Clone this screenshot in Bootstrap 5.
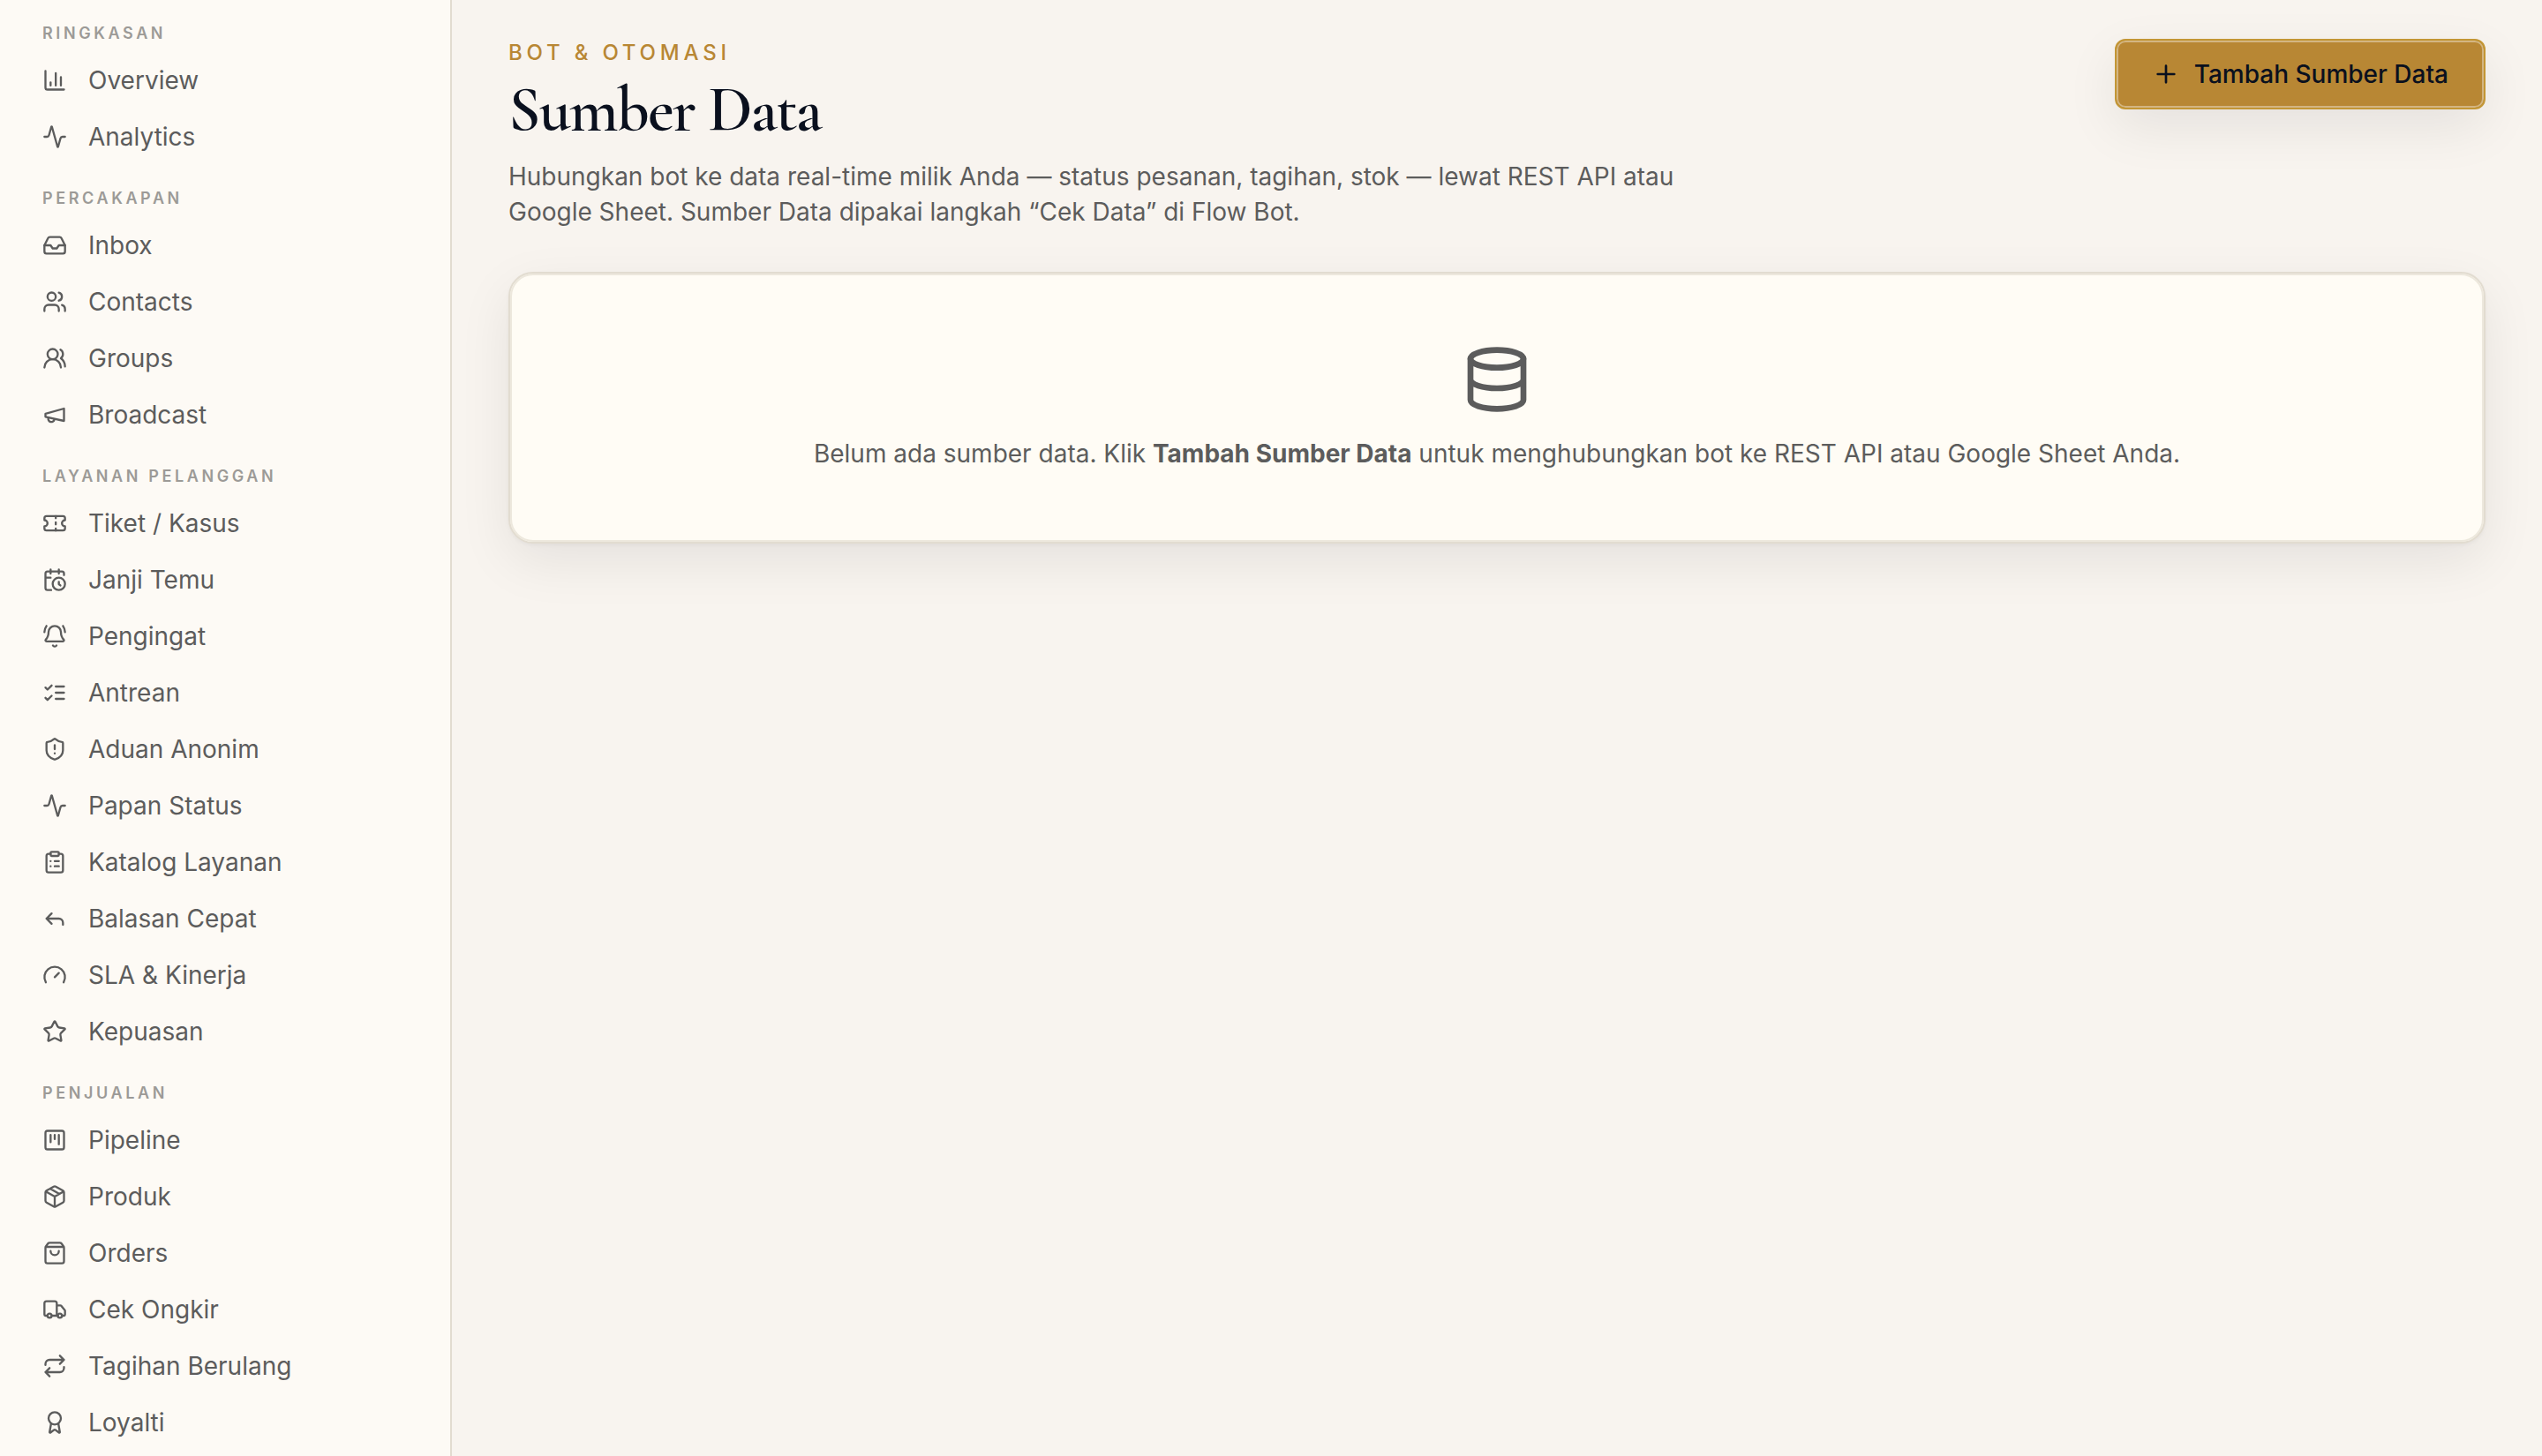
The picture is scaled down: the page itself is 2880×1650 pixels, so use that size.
<!DOCTYPE html>
<html lang="id">
<head>
<meta charset="utf-8">
<meta name="viewport" content="width=device-width, initial-scale=1">
<title>Sumber Data</title>
<link href="https://cdn.jsdelivr.net/npm/bootstrap@5.3.0/dist/css/bootstrap.min.css" rel="stylesheet">
<style>
  :root {
    --ink: #0a101e;
    --muted-ink: #5c5c5c;
    --gold: #b88734;
    --line: #e2dcd0;
    --paper: #f8f4ef;
  }
  body {
    font-family: Inter, "Liberation Sans", sans-serif;
    font-size: 28px;
    line-height: 40px;
    color: var(--muted-ink);
    background: var(--paper);
  }
  .icon {
    width: 28px;
    height: 28px;
    flex: none;
    fill: none;
    stroke: currentColor;
    stroke-width: 2;
    stroke-linecap: round;
    stroke-linejoin: round;
  }
  .side-panel {
    width: 512px;
    background: #fdfaf5;
    border-right: 2px solid var(--line);
    padding: 24px 24px 0;
  }
  .side-groups { gap: 26px; }
  .side-heading {
    font-size: 18px;
    line-height: 28px;
    font-weight: 600;
    letter-spacing: 0.2em;
    color: #9c9a97;
    margin-bottom: 9px;
    padding-left: 24px;
  }
  .side-link {
    height: 60px;
    gap: 24px;
    padding: 0 24px;
    border-radius: 12px;
    color: inherit;
  }
  .side-link:hover { background: #f3eee5; color: var(--ink); }
  .page-main { padding: 44px 64px; }
  .page-eyebrow {
    font-size: 24px;
    line-height: 32px;
    font-weight: 500;
    letter-spacing: 0.2em;
    color: var(--gold);
  }
  .page-title {
    font-family: "Cormorant Garamond", "Liberation Serif", serif;
    font-size: 72px;
    line-height: 96px;
    font-weight: 600;
    letter-spacing: -0.025em;
    color: var(--ink);
  }
  .page-intro { max-width: 1344px; }
  .btn-gold {
    --bs-btn-color: var(--ink);
    --bs-btn-bg: var(--gold);
    --bs-btn-border-color: #c39635;
    --bs-btn-hover-color: var(--ink);
    --bs-btn-hover-bg: #c39635;
    --bs-btn-hover-border-color: #c39635;
    --bs-btn-border-width: 2px;
    --bs-btn-border-radius: 12px;
    --bs-btn-padding-x: 40px;
    --bs-btn-padding-y: 18px;
    --bs-btn-font-size: 28px;
    --bs-btn-line-height: 40px;
    --bs-btn-font-weight: 500;
    gap: 16px;
    box-shadow: inset 0 0 0 2px #d3b582, 0 20px 60px rgba(10, 16, 30, .08);
  }
  .btn-gold .icon { width: 32px; height: 32px; }
  .empty-card {
    --bs-card-bg: #fffcf5;
    --bs-card-color: var(--muted-ink);
    --bs-card-border-color: var(--line);
    --bs-card-border-width: 2px;
    --bs-card-border-radius: 28px;
    --bs-card-spacer-x: 80px;
    --bs-card-spacer-y: 80px;
    box-shadow: inset 0 0 0 2px #ede8dd, 0 2px 4px rgba(10, 16, 30, .04), 0 20px 60px rgba(10, 16, 30, .08);
  }
  .empty-card .icon { width: 80px; height: 80px; }
</style>
<script src="https://cdn.jsdelivr.net/npm/bootstrap@5.3.0/dist/js/bootstrap.bundle.min.js"></script>
</head>
<body>
<svg class="d-none" aria-hidden="true">
  <symbol id="i-chart" viewBox="0 0 24 24"><path d="M3 3v16a2 2 0 0 0 2 2h16M18 17V9M13 17V5M8 17v-3"/></symbol>
  <symbol id="i-activity" viewBox="0 0 24 24"><path d="M22 12h-2.48a2 2 0 0 0-1.93 1.46l-2.35 8.36a.25.25 0 0 1-.48 0L9.24 2.18a.25.25 0 0 0-.48 0l-2.35 8.36A2 2 0 0 1 4.49 12H2"/></symbol>
  <symbol id="i-inbox" viewBox="0 0 24 24"><path d="M22 12h-6l-2 3h-4l-2-3H2"/><path d="M5.45 5.11 2 12v6a2 2 0 0 0 2 2h16a2 2 0 0 0 2-2v-6l-3.45-6.89A2 2 0 0 0 16.76 4H7.24a2 2 0 0 0-1.79 1.11z"/></symbol>
  <symbol id="i-users" viewBox="0 0 24 24"><path d="M16 21v-2a4 4 0 0 0-4-4H6a4 4 0 0 0-4 4v2"/><circle cx="9" cy="7" r="4"/><path d="M22 21v-2a4 4 0 0 0-3-3.87M16 3.13a4 4 0 0 1 0 7.75"/></symbol>
  <symbol id="i-groups" viewBox="0 0 24 24"><path d="M18 21a8 8 0 0 0-16 0"/><circle cx="10" cy="8" r="5"/><path d="M22 20c0-3.37-2-6.5-4-8a5 5 0 0 0-.45-8.3"/></symbol>
  <symbol id="i-megaphone" viewBox="0 0 24 24"><path d="m3 11 18-5v12L3 14v-3z"/><path d="M11.6 16.8a3 3 0 1 1-5.8-1.6"/></symbol>
  <symbol id="i-ticket" viewBox="0 0 24 24"><path d="M2 9a3 3 0 0 1 0 6v2a2 2 0 0 0 2 2h16a2 2 0 0 0 2-2v-2a3 3 0 0 1 0-6V7a2 2 0 0 0-2-2H4a2 2 0 0 0-2 2Z"/><path d="M13 5v2M13 17v2M13 11v2"/></symbol>
  <symbol id="i-calendar" viewBox="0 0 24 24"><path d="M21 7.5V6a2 2 0 0 0-2-2H5a2 2 0 0 0-2 2v14a2 2 0 0 0 2 2h3.5M16 2v4M8 2v4M3 10h5M17.5 17.5 16 16.3V14"/><circle cx="16" cy="16" r="6"/></symbol>
  <symbol id="i-bell" viewBox="0 0 24 24"><path d="M10.268 21a2 2 0 0 0 3.464 0M22 8c0-2.3-.8-4.3-2-6M3.262 15.326A1 1 0 0 0 4 17h16a1 1 0 0 0 .74-1.673C19.41 13.956 18 12.499 18 8A6 6 0 0 0 6 8c0 4.499-1.411 5.956-2.738 7.326M4 2C2.8 3.7 2 5.7 2 8"/></symbol>
  <symbol id="i-checks" viewBox="0 0 24 24"><path d="m3 17 2 2 4-4M3 7l2 2 4-4M13 6h8M13 12h8M13 18h8"/></symbol>
  <symbol id="i-shield" viewBox="0 0 24 24"><path d="M20 13c0 5-3.5 7.5-7.66 8.95a1 1 0 0 1-.67-.01C7.5 20.5 4 18 4 13V6a1 1 0 0 1 1-1c2 0 4.5-1.2 6.24-2.72a1.17 1.17 0 0 1 1.52 0C14.51 3.81 17 5 19 5a1 1 0 0 1 1 1zM12 8v4M12 16h.01"/></symbol>
  <symbol id="i-clipboard" viewBox="0 0 24 24"><rect x="8" y="2" width="8" height="4" rx="1"/><path d="M16 4h2a2 2 0 0 1 2 2v14a2 2 0 0 1-2 2H6a2 2 0 0 1-2-2V6a2 2 0 0 1 2-2h2M12 11h4M12 16h4M8 11h.01M8 16h.01"/></symbol>
  <symbol id="i-reply" viewBox="0 0 24 24"><path d="m9 17-5-5 5-5M20 18v-2a4 4 0 0 0-4-4H4"/></symbol>
  <symbol id="i-gauge" viewBox="0 0 24 24"><path d="m12 14 4-4M3.34 19a10 10 0 1 1 17.32 0"/></symbol>
  <symbol id="i-star" viewBox="0 0 24 24"><path d="M11.525 2.295a.53.53 0 0 1 .95 0l2.31 4.679a2.123 2.123 0 0 0 1.595 1.16l5.166.756a.53.53 0 0 1 .294.904l-3.736 3.638a2.123 2.123 0 0 0-.611 1.878l.882 5.14a.53.53 0 0 1-.771.56l-4.618-2.428a2.122 2.122 0 0 0-1.973 0L6.396 21.01a.53.53 0 0 1-.77-.56l.881-5.139a2.122 2.122 0 0 0-.611-1.879L2.16 9.795a.53.53 0 0 1 .294-.906l5.165-.755a2.122 2.122 0 0 0 1.597-1.16z"/></symbol>
  <symbol id="i-kanban" viewBox="0 0 24 24"><rect x="3" y="3" width="18" height="18" rx="2"/><path d="M8 7v7M12 7v4M16 7v9"/></symbol>
  <symbol id="i-package" viewBox="0 0 24 24"><path d="m7.5 4.27 9 5.15M21 8a2 2 0 0 0-1-1.73l-7-4a2 2 0 0 0-2 0l-7 4A2 2 0 0 0 3 8v8a2 2 0 0 0 1 1.73l7 4a2 2 0 0 0 2 0l7-4A2 2 0 0 0 21 16ZM3.3 7l8.7 5 8.7-5M12 22V12"/></symbol>
  <symbol id="i-bag" viewBox="0 0 24 24"><path d="M16 10a4 4 0 0 1-8 0M3.103 6.034h17.794M3.4 5.467a2 2 0 0 0-.4 1.2V20a2 2 0 0 0 2 2h14a2 2 0 0 0 2-2V6.667a2 2 0 0 0-.4-1.2l-2-2.667A2 2 0 0 0 17 2H7a2 2 0 0 0-1.6.8z"/></symbol>
  <symbol id="i-truck" viewBox="0 0 24 24"><path d="M14 18V6a2 2 0 0 0-2-2H4a2 2 0 0 0-2 2v11a1 1 0 0 0 1 1h2M15 18H9M19 18h2a1 1 0 0 0 1-1v-3.65a1 1 0 0 0-.22-.624l-3.48-4.35A1 1 0 0 0 17.52 8H14"/><circle cx="17" cy="18" r="2"/><circle cx="7" cy="18" r="2"/></symbol>
  <symbol id="i-repeat" viewBox="0 0 24 24"><path d="m17 2 4 4-4 4M3 11v-1a4 4 0 0 1 4-4h14M7 22l-4-4 4-4M21 13v1a4 4 0 0 1-4 4H3"/></symbol>
  <symbol id="i-award" viewBox="0 0 24 24"><path d="m15.477 12.89 1.515 8.526a.5.5 0 0 1-.81.47l-3.58-2.687a1 1 0 0 0-1.197 0l-3.586 2.686a.5.5 0 0 1-.81-.469l1.514-8.526"/><circle cx="12" cy="8" r="6"/></symbol>
  <symbol id="i-plus" viewBox="0 0 24 24"><path d="M5 12h14M12 5v14"/></symbol>
  <symbol id="i-database" viewBox="0 0 24 24"><ellipse cx="12" cy="5" rx="9" ry="3"/><path d="M3 5v14a9 3 0 0 0 18 0V5M3 12a9 3 0 0 0 18 0"/></symbol>
</svg>

<div class="d-flex vh-100 overflow-hidden">
  <aside class="side-panel flex-shrink-0 overflow-hidden">
    <nav class="side-groups d-flex flex-column" aria-label="Menu utama">
      <section>
        <h2 class="side-heading">RINGKASAN</h2>
        <div class="nav flex-column gap-1">
          <a class="side-link d-flex align-items-center text-decoration-none" href="#"><svg class="icon"><use href="#i-chart"/></svg>Overview</a>
          <a class="side-link d-flex align-items-center text-decoration-none" href="#"><svg class="icon"><use href="#i-activity"/></svg>Analytics</a>
        </div>
      </section>
      <section>
        <h2 class="side-heading">PERCAKAPAN</h2>
        <div class="nav flex-column gap-1">
          <a class="side-link d-flex align-items-center text-decoration-none" href="#"><svg class="icon"><use href="#i-inbox"/></svg>Inbox</a>
          <a class="side-link d-flex align-items-center text-decoration-none" href="#"><svg class="icon"><use href="#i-users"/></svg>Contacts</a>
          <a class="side-link d-flex align-items-center text-decoration-none" href="#"><svg class="icon"><use href="#i-groups"/></svg>Groups</a>
          <a class="side-link d-flex align-items-center text-decoration-none" href="#"><svg class="icon"><use href="#i-megaphone"/></svg>Broadcast</a>
        </div>
      </section>
      <section>
        <h2 class="side-heading">LAYANAN PELANGGAN</h2>
        <div class="nav flex-column gap-1">
          <a class="side-link d-flex align-items-center text-decoration-none" href="#"><svg class="icon"><use href="#i-ticket"/></svg>Tiket / Kasus</a>
          <a class="side-link d-flex align-items-center text-decoration-none" href="#"><svg class="icon"><use href="#i-calendar"/></svg>Janji Temu</a>
          <a class="side-link d-flex align-items-center text-decoration-none" href="#"><svg class="icon"><use href="#i-bell"/></svg>Pengingat</a>
          <a class="side-link d-flex align-items-center text-decoration-none" href="#"><svg class="icon"><use href="#i-checks"/></svg>Antrean</a>
          <a class="side-link d-flex align-items-center text-decoration-none" href="#"><svg class="icon"><use href="#i-shield"/></svg>Aduan Anonim</a>
          <a class="side-link d-flex align-items-center text-decoration-none" href="#"><svg class="icon"><use href="#i-activity"/></svg>Papan Status</a>
          <a class="side-link d-flex align-items-center text-decoration-none" href="#"><svg class="icon"><use href="#i-clipboard"/></svg>Katalog Layanan</a>
          <a class="side-link d-flex align-items-center text-decoration-none" href="#"><svg class="icon"><use href="#i-reply"/></svg>Balasan Cepat</a>
          <a class="side-link d-flex align-items-center text-decoration-none" href="#"><svg class="icon"><use href="#i-gauge"/></svg>SLA &amp; Kinerja</a>
          <a class="side-link d-flex align-items-center text-decoration-none" href="#"><svg class="icon"><use href="#i-star"/></svg>Kepuasan</a>
        </div>
      </section>
      <section>
        <h2 class="side-heading">PENJUALAN</h2>
        <div class="nav flex-column gap-1">
          <a class="side-link d-flex align-items-center text-decoration-none" href="#"><svg class="icon"><use href="#i-kanban"/></svg>Pipeline</a>
          <a class="side-link d-flex align-items-center text-decoration-none" href="#"><svg class="icon"><use href="#i-package"/></svg>Produk</a>
          <a class="side-link d-flex align-items-center text-decoration-none" href="#"><svg class="icon"><use href="#i-bag"/></svg>Orders</a>
          <a class="side-link d-flex align-items-center text-decoration-none" href="#"><svg class="icon"><use href="#i-truck"/></svg>Cek Ongkir</a>
          <a class="side-link d-flex align-items-center text-decoration-none" href="#"><svg class="icon"><use href="#i-repeat"/></svg>Tagihan Berulang</a>
          <a class="side-link d-flex align-items-center text-decoration-none" href="#"><svg class="icon"><use href="#i-award"/></svg>Loyalti</a>
        </div>
      </section>
    </nav>
  </aside>

  <main class="page-main flex-grow-1 overflow-auto">
    <header class="d-flex justify-content-between align-items-start mb-5">
      <div>
        <p class="page-eyebrow mb-0">BOT &amp; OTOMASI</p>
        <h1 class="page-title mb-2">Sumber Data</h1>
        <p class="page-intro mb-0">Hubungkan bot ke data real-time milik Anda — status pesanan, tagihan, stok — lewat REST API atau Google Sheet. Sumber Data dipakai langkah “Cek Data” di Flow Bot.</p>
      </div>
      <button type="button" class="btn btn-gold d-inline-flex align-items-center flex-shrink-0"><svg class="icon" aria-hidden="true"><use href="#i-plus"/></svg>Tambah Sumber Data</button>
    </header>
    <section class="card empty-card">
      <div class="card-body d-flex flex-column align-items-center text-center">
        <svg class="icon mb-4" aria-hidden="true"><use href="#i-database"/></svg>
        <p class="mb-0">Belum ada sumber data. Klik <strong class="fw-bold">Tambah Sumber Data</strong> untuk menghubungkan bot ke REST API atau Google Sheet Anda.</p>
      </div>
    </section>
  </main>
</div>
</body>
</html>
